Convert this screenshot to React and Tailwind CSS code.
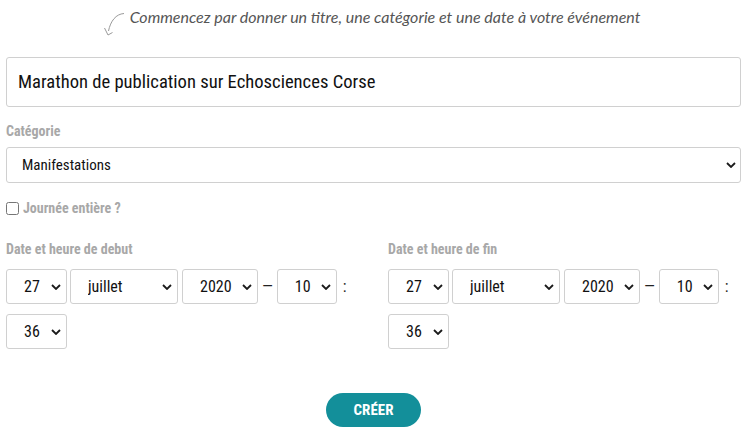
const Chevron = ({ className = '' }) => (
  <svg
    viewBox="0 0 10 6"
    className={`pointer-events-none absolute top-1/2 h-[6px] w-[10px] -translate-y-1/2 ${className}`}
    fill="none"
    stroke="#1a1a1a"
    strokeWidth="1.8"
  >
    <polyline points="1,1 5,5 9,1" />
  </svg>
);

const Select = ({ value, className = '' }) => (
  <div className={`relative h-[35px] shrink-0 ${className}`}>
    <select
      defaultValue={value}
      className="h-full w-full appearance-none rounded-[3px] border border-[#d0d0d0] bg-white pl-[17px] pr-[16px] text-[16px] text-[#111] outline-none"
    >
      <option>{value}</option>
    </select>
    <Chevron className="right-[6px]" />
  </div>
);

const DateTimeGroup = ({ label, className = '' }) => (
  <div className={className}>
    <div className="text-[14px] font-bold text-[#a8a8a8]">{label}</div>
    <div className="mt-[9px] flex items-center">
      <Select value="27" className="w-[61px]" />
      <Select value="juillet" className="ml-[3px] w-[108px]" />
      <Select value="2020" className="ml-[4px] w-[76px]" />
      <span className="mx-[4px] text-[16px] text-[#222]">—</span>
      <Select value="10" className="w-[60px]" />
      <span className="ml-[6px] text-[16px] text-[#222]">:</span>
    </div>
    <div className="mt-[10px] flex">
      <Select value="36" className="w-[61px]" />
    </div>
  </div>
);

export default function App() {
  return (
    <div className="min-h-[437px] bg-white pl-[6px] pr-[8px] pt-[5px] font-['Roboto_Condensed',Roboto,sans-serif] text-[#222]">
      {/* Hint */}
      <div className="flex items-start justify-center gap-[5px] pr-[4px]">
        <svg width="22" height="26" viewBox="0 0 22 26" fill="none" stroke="#9a9a9a" strokeWidth="1" className="mt-[6px]">
          <path d="M21 2.5 C13 3 7.5 10 5.5 20" />
          <path d="M1.5 17 L5 24 L9.5 21.5" />
        </svg>
        <p className="font-['Lato',sans-serif] text-[16px] italic text-[#555]">
          Commencez par donner un titre, une catégorie et une date à votre événement
        </p>
      </div>

      {/* Title */}
      <input
        defaultValue="Marathon de publication sur Echosciences Corse"
        className="mt-[20px] h-[50px] w-full rounded-[3px] border border-[#d0d0d0] px-[11px] text-[18.6px] text-[#111] outline-none"
      />

      {/* Category */}
      <div className="mt-[14px] text-[14px] font-bold text-[#a8a8a8]">Catégorie</div>
      <div className="relative mt-[5px] h-[36px]">
        <select
          defaultValue="Manifestations"
          className="h-full w-full appearance-none rounded-[3px] border border-[#d0d0d0] bg-white px-[15px] text-[15px] text-[#111] outline-none"
        >
          <option>Manifestations</option>
        </select>
        <Chevron className="right-[5px]" />
      </div>

      <label className="mt-[15px] flex items-center gap-[4px]">
        <input type="checkbox" className="h-[13px] w-[13px]" />
        <span className="text-[14px] font-bold text-[#a8a8a8]">Journée entière ?</span>
      </label>

      {/* Dates */}
      <div className="mt-[20px] flex">
        <DateTimeGroup label="Date et heure de debut" className="w-[382px] shrink-0" />
        <DateTimeGroup label="Date et heure de fin" className="flex-1" />
      </div>

      <div className="mt-[44px] flex justify-center">
        <button className="h-[34px] w-[95px] rounded-full bg-[#138f9a] text-[15px] font-bold text-white">
          CRÉER
        </button>
      </div>
    </div>
  );
}
